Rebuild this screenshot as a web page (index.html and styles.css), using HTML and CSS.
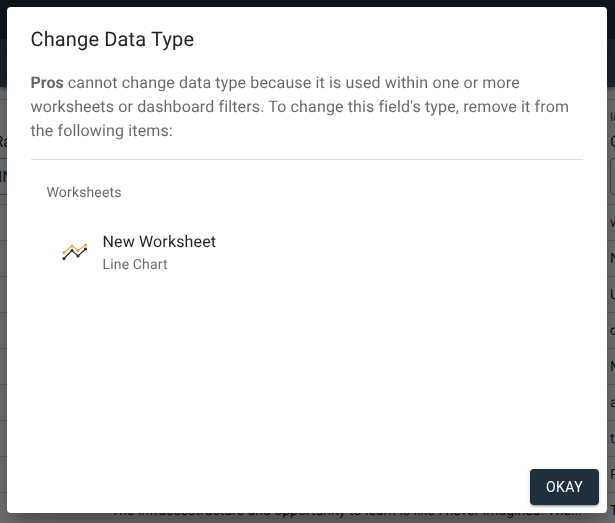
FILE: index.html
```html
<!DOCTYPE html>
<html lang="en">
<head>
<meta charset="utf-8">
<title>Change Data Type</title>
<link rel="stylesheet" href="styles.css">
</head>
<body>
<div class="page">
  <header class="topbar"></header>
  <nav class="tabs"></nav>
  <div class="strip"></div>
  <section class="fields">
    <div class="field-left">
      <div class="field-name">Ra</div>
      <div class="field-type">IN</div>
    </div>
    <div class="field-right">
      <div class="field-label">In</div>
      <div class="field-name">C</div>
      <div class="field-box"></div>
    </div>
  </section>
  <div class="rows">
    <div class="row"><span></span><span>w</span></div>
    <div class="row"><span></span><span>N</span></div>
    <div class="row"><span></span><span>U</span></div>
    <div class="row"><span></span><span>c</span></div>
    <div class="row"><span></span><span>M</span></div>
    <div class="row"><span></span><span>a</span></div>
    <div class="row"><span></span><span>t</span></div>
    <div class="row"><span></span><span>P</span></div>
    <div class="row"><span class="comment">The infraesestructure and opportunity to learn is like I never imagined. The...</span><span>T</span></div>
  </div>
</div>
<div class="overlay">
  <div class="dialog" role="dialog">
    <h1 class="title">Change Data Type</h1>
    <p class="message"><b>Pros</b> cannot change data type because it is used within one or more worksheets or dashboard filters. To change this field's type, remove it from the following items:</p>
    <div class="list">
      <div class="subheader">Worksheets</div>
      <div class="item">
        <svg class="chart-icon" width="26" height="20" viewBox="0 0 26 20">
          <g fill="#e9a63a" stroke="#e9a63a" stroke-width="1.2">
            <path fill="none" d="M2 10.5 10 4l6 4.5 7.500-5.500"/>
            <circle cx="2" cy="10.500" r="1"/><circle cx="10" cy="4" r="1"/><circle cx="16" cy="8.500" r="1"/><circle cx="23.500" cy="3" r="1"/>
          </g>
          <g fill="#1f303c" stroke="#1f303c" stroke-width="1.200">
            <path fill="none" d="M2 16.500 10 8.500l6 5.500 7.500-7"/>
            <circle cx="2" cy="16.500" r="1"/><circle cx="10" cy="8.500" r="1"/><circle cx="16" cy="14" r="1"/><circle cx="23.500" cy="7" r="1"/>
          </g>
        </svg>
        <div>
          <div class="item-name">New Worksheet</div>
          <div class="item-kind">Line Chart</div>
        </div>
      </div>
    </div>
    <footer class="actions"><button class="okay">OKAY</button></footer>
  </div>
</div>
</body>
</html>
```
FILE: styles.css
```css
* { box-sizing: border-box; }
body {
  margin: 0;
  height: 523px;
  overflow: hidden;
  font-family: Roboto, sans-serif;
  color: rgba(0, 0, 0, .87);
  text-rendering: geometricPrecision;
}
.page { height: 523px; overflow: hidden; background: #fafafa; }
.topbar { height: 39px; background: #1f303c; }
.tabs { height: 48px; background: #3b4f5b; box-shadow: 0 2px 4px rgba(0, 0, 0, .4); }
.strip { height: 13px; border-bottom: 1px solid #cfcfcf; }
.fields {
  display: flex;
  justify-content: space-between;
  height: 105px;
  border-bottom: 1px solid #cfcfcf;
}
.field-left { width: 60px; padding-top: 32px; }
.field-left .field-name { height: 26px; margin-left: -6.5px; }
.field-type {
  height: 37px;
  padding: 9px 0 0;
  border: solid #999;
  border-width: 1px 0;
  font-size: 16px;
  line-height: 18px;
  color: #1f303c;
  text-indent: -2px;
}
.field-right { width: 5px; padding-top: 10px; white-space: nowrap; }
.field-label { font-size: 12px; line-height: 14px; margin-bottom: 8px; }
.field-name { font-size: 16px; line-height: 19px; }
.field-box { width: 80px; height: 37px; margin-top: 7px; border: 1px solid #999; border-radius: 4px; }
.row {
  display: grid;
  grid-template-columns: 610px 5px;
  height: 36px;
  line-height: 36px;
  border-bottom: 1px solid #cfcfcf;
  font-size: 14px;
  white-space: nowrap;
}
.comment { padding-left: 111px; }
.overlay {
  position: fixed;
  inset: 0;
  padding: 7px 8px 10px 7px;
  background: rgba(0, 0, 0, .54);
}
.dialog {
  display: flex;
  flex-direction: column;
  height: 506px;
  padding: 16px 8px 8px 23.5px;
  border-radius: 4px;
  background: #fff;
  box-shadow: 0 11px 15px -7px rgba(0, 0, 0, .2), 0 24px 38px 3px rgba(0, 0, 0, .14), 0 9px 46px 8px rgba(0, 0, 0, .12);
}
.title { margin: 0; font-size: 20px; font-weight: 400; line-height: 32px; letter-spacing: .15px; }
.message {
  margin: 16px 16px 0 0;
  padding-bottom: 16px;
  border-bottom: 1px solid #e0e0e0;
  color: rgba(0, 0, 0, .6);
  font-size: 16px;
  line-height: 24px;
  letter-spacing: .14px;
}
.message b { font-weight: 700; letter-spacing: 0; }
.list { flex: 1; padding: 8px 16px; }
.subheader { height: 48px; font-size: 14px; line-height: 50px; letter-spacing: .15px; color: rgba(0, 0, 0, .6); }
.item { display: flex; gap: 15px; padding: 14px 0 0 15px; }
.chart-icon { margin-top: 12px; flex: none; }
.item-name { font-size: 16px; line-height: 24px; letter-spacing: .15px; }
.item-kind { font-size: 14px; line-height: 22px; letter-spacing: .15px; color: rgba(0, 0, 0, .6); }
.actions { display: flex; justify-content: flex-end; }
.okay {
  width: 69px;
  height: 36px;
  padding: 0;
  border: 0;
  border-radius: 4px;
  background: #1f303c;
  color: #fff;
  font: 400 14px/36px Roboto, sans-serif;
  letter-spacing: .4px;
  box-shadow: 0 3px 1px -2px rgba(0, 0, 0, .2), 0 2px 2px rgba(0, 0, 0, .14), 0 1px 5px rgba(0, 0, 0, .12);
}
```
